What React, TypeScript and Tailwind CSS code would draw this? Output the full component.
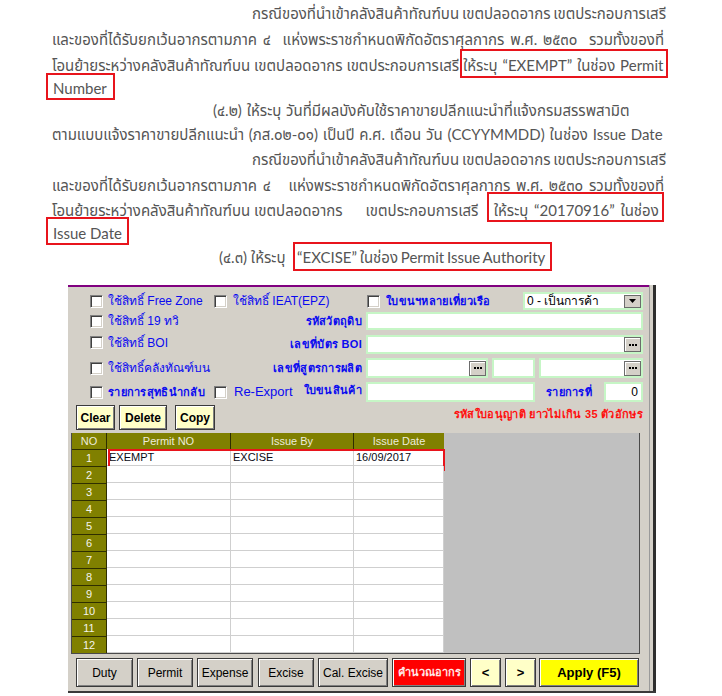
import React from "react";

const docFont = "font-['Lato','Tahoma','Noto_Sans_Thai','Noto_Sans','DejaVu_Sans',sans-serif]";
const winFont = "font-['Liberation_Sans','Tahoma','DejaVu_Sans',sans-serif]";

function Cb() {
  return (
    <span className="inline-block w-[13px] h-[13px] shrink-0 bg-white border border-t-[#808080] border-l-[#808080] border-b-white border-r-white shadow-[inset_1px_1px_0_#404040,inset_-1px_-1px_0_#d4d0c8]" />
  );
}

function Dots() {
  return (
    <div className="w-[17px] h-[15px] shrink-0 bg-[#d4d0c8] border border-[#6c6c6c] flex items-center justify-center gap-[1px] shadow-[inset_1px_1px_0_#ffffff]">
      <span className="w-[2px] h-[2px] bg-black" />
      <span className="w-[2px] h-[2px] bg-black" />
      <span className="w-[2px] h-[2px] bg-black" />
    </div>
  );
}

function Field({ className, children }: { className: string; children?: React.ReactNode }) {
  return (
    <div className={`h-full bg-white border-2 border-[#c6f6c6] flex items-center justify-end ${className}`}>
      {children}
    </div>
  );
}

const blue = "text-[#0a0af0] text-[11px] font-bold tracking-[0.3px] whitespace-nowrap";

function WinBtn({ className, children }: { className: string; children: React.ReactNode }) {
  return (
    <div
      className={`h-full flex items-center justify-center border border-[#3a3a3a] shadow-[inset_1px_1px_0_#ffffff,inset_-1px_-1px_0_#808080] ${className}`}
    >
      {children}
    </div>
  );
}

function Doc() {
  return (
    <div className={`${docFont} text-[15px] text-[#555555] whitespace-nowrap`}>
      <div className="h-[26px] leading-[26px] pl-[252px] [word-spacing:-1px]">
        กรณีของที่นำเข้าคลังสินค้าทัณฑ์บน เขตปลอดอากร เขตประกอบการเสรี
      </div>
      <div className="h-[27px] leading-[27px] pl-[52px] [word-spacing:2px]">
        และของที่ได้รับยกเว้นอากรตามภาค ๔&nbsp; แห่งพระราชกำหนดพิกัดอัตราศุลกากร พ.ศ. ๒๕๓๐&nbsp; รวมทั้งของที่
      </div>
      <div className="h-[24px] leading-[24px] pl-[52px]">
        โอนย้ายระหว่างคลังสินค้าทัณฑ์บน เขตปลอดอากร เขตประกอบการเสรี{" "}
        <span className="relative inline-block leading-[20px] [word-spacing:1px]">
          ให้ระบุ “EXEMPT” ในช่อง Permit
          <span className="absolute -left-[3px] -right-[5px] -top-[6px] -bottom-[3px] border-2 border-[#e8141c]" />
        </span>
      </div>
      <div className="h-[22px] leading-[22px] pl-[53px]">
        <span className="relative inline-block leading-[20px]">
          Number
          <span className="absolute -left-[7px] -right-[8px] -top-[5px] -bottom-[2px] border-2 border-[#e8141c]" />
        </span>
      </div>
      <div className="h-[23px] leading-[23px] pl-[213px] [word-spacing:1px]">
        (๔.๒) ให้ระบุ วันที่มีผลบังคับใช้ราคาขายปลีกแนะนำที่แจ้งกรมสรรพสามิต
      </div>
      <div className="h-[25px] leading-[25px] pl-[52px] [word-spacing:1px]">
        ตามแบบแจ้งราคาขายปลีกแนะนำ (ภส.๐๒-๐๑) เป็นปี ค.ศ. เดือน วัน (CCYYMMDD) ในช่อง Issue Date
      </div>
      <div className="h-[25px] leading-[25px] pl-[252px] [word-spacing:-1px]">
        กรณีของที่นำเข้าคลังสินค้าทัณฑ์บน เขตปลอดอากร เขตประกอบการเสรี
      </div>
      <div className="h-[26px] leading-[26px] pl-[52px] [word-spacing:2px]">
        และของที่ได้รับยกเว้นอากรตามภาค ๔&nbsp;&nbsp; แห่งพระราชกำหนดพิกัดอัตราศุลกากร พ.ศ. ๒๕๓๐ รวมทั้งของที่
      </div>
      <div className="h-[24px] leading-[24px] pl-[52px]">
        โอนย้ายระหว่างคลังสินค้าทัณฑ์บน เขตปลอดอากร&nbsp;&nbsp;&nbsp;&nbsp;&nbsp; เขตประกอบการเสรี&nbsp;&nbsp;&nbsp;{" "}
        <span className="relative inline-block leading-[20px] [word-spacing:2px]">
          ให้ระบุ “20170916” ในช่อง
          <span className="absolute -left-[7px] -right-[5px] -top-[8px] -bottom-[2px] border-2 border-[#e8141c]" />
        </span>
      </div>
      <div className="h-[23px] leading-[23px] pl-[53px]">
        <span className="relative inline-block leading-[20px]">
          Issue Date
          <span className="absolute -left-[7px] -right-[7px] -top-[6px] -bottom-[2px] border-2 border-[#e8141c]" />
        </span>
      </div>
      <div className="h-[25px] leading-[25px] pl-[219px]">
        (๔.๓) ให้ระบุ&nbsp;&nbsp;{" "}
        <span className="relative inline-block leading-[20px] [word-spacing:-1px]">
          “EXCISE” ในช่อง Permit Issue Authority
          <span className="absolute -left-[4px] -right-[7px] -top-[5px] -bottom-[4px] border-2 border-[#e8141c]" />
        </span>
      </div>
    </div>
  );
}

function Table() {
  const rows = Array.from({ length: 12 }, (_, i) => i + 1);
  return (
    <div className="mt-[3px] ml-[3px] w-[569px] h-[221px] bg-[#c0c0c0] border-l border-r border-b border-[#4a4a4a] flex">
      <div className="w-[372px] flex flex-col">
        <div className="h-[16px] flex bg-[#808000] text-[#ececdc] text-[11px]">
          <div className="w-[35px] border-r border-[#2e2e00] flex items-center justify-center">NO</div>
          <div className="w-[124px] border-r border-[#2e2e00] flex items-center justify-center">Permit NO</div>
          <div className="w-[123px] border-r border-[#2e2e00] flex items-center justify-center">Issue By</div>
          <div className="w-[90px] flex items-center justify-center">Issue Date</div>
        </div>
        {rows.map((n) => (
          <div key={n} className="relative h-[17px] flex text-[11px]">
            <div className="w-[35px] bg-[#808000] border-t border-r border-[#2e2e00] flex items-center justify-center text-[#f4f4ec]">
              {n}
            </div>
            <div className="w-[124px] bg-white border-r border-b border-[#cfcfcf] flex items-center pl-[2px] text-[#0a0a14]">
              {n === 1 ? "EXEMPT" : ""}
            </div>
            <div className="w-[123px] bg-white border-r border-b border-[#cfcfcf] flex items-center pl-[2px] text-[#0a0a14]">
              {n === 1 ? "EXCISE" : ""}
            </div>
            <div className="w-[90px] bg-white border-r border-b border-[#cfcfcf] flex items-center pl-[2px] text-[#0a0a14]">
              {n === 1 ? "16/09/2017" : ""}
            </div>
            {n === 1 && (
              <span className="absolute left-[36px] -right-[1px] top-0 -bottom-[5px] border-2 border-[#e8141c]" />
            )}
          </div>
        ))}
      </div>
    </div>
  );
}

function Form() {
  return (
    <div className={`${winFont} mt-[15px] ml-[68px] w-[588px] flex flex-col`}>
      <div className="flex">
        <div className="w-[581px] h-[406px] bg-[#d4d0c8] border-t-2 border-[#800080] flex flex-col">
          {/* Row 1 */}
          <div className="mt-[5px] h-[18px] flex items-center pl-[22px]">
            <div className="w-[124px] flex items-center gap-[5px]">
              <Cb />
              <span className="text-[#0a0af0] text-[12px] whitespace-nowrap">ใช้สิทธิ์ Free Zone</span>
            </div>
            <div className="w-[148px] flex items-center gap-[6px]">
              <Cb />
              <span className="text-[#0a0af0] text-[12px] whitespace-nowrap">ใช้สิทธิ์ IEAT(EPZ)</span>
            </div>
            <div className="w-[4px]" />
            <div className="w-[277px] h-full flex items-center">
              <div className="w-[157px] flex items-center gap-[6px] pl-[1px]">
                <Cb />
                <span className={blue}>ใบขนฯหลายเที่ยวเรือ</span>
              </div>
              <div className="w-[120px] h-full bg-white border-2 border-[#c6f6c6] flex items-center justify-between">
                <span className="text-[12px] text-black pl-[2px] whitespace-nowrap">0 - เป็นการค้า</span>
                <div className="w-[17px] h-[13px] bg-[#d4d0c8] border border-[#6c6c6c] flex items-center justify-center">
                  <svg width="7" height="4" viewBox="0 0 7 4">
                    <path d="M0 0 H7 L3.5 4 Z" fill="#000" />
                  </svg>
                </div>
              </div>
            </div>
          </div>
          {/* Row 2 */}
          <div className="mt-[2px] h-[18px] flex items-center pl-[22px]">
            <div className="w-[124px] flex items-center gap-[5px]">
              <Cb />
              <span className="text-[#0a0af0] text-[12px] whitespace-nowrap">ใช้สิทธิ์ 19 ทวิ</span>
            </div>
            <div className="w-[148px] flex justify-end">
              <span className={blue}>รหัสวัตถุดิบ</span>
            </div>
            <div className="w-[4px]" />
            <Field className="w-[277px]" />
          </div>
          {/* Row 3 */}
          <div className="mt-[5px] h-[19px] flex items-center pl-[22px]">
            <div className="w-[124px] flex items-center gap-[5px] -mt-[4px]">
              <Cb />
              <span className="text-[#0a0af0] text-[12px] whitespace-nowrap">ใช้สิทธิ์ BOI</span>
            </div>
            <div className="w-[148px] flex justify-end">
              <span className={blue}>เลขที่บัตร BOI</span>
            </div>
            <div className="w-[4px]" />
            <Field className="w-[277px]">
              <Dots />
            </Field>
          </div>
          {/* Row 4 */}
          <div className="mt-[4px] h-[20px] flex items-center pl-[22px]">
            <div className="w-[124px] flex items-center gap-[5px]">
              <Cb />
              <span className="text-[#0a0af0] text-[12px] whitespace-nowrap">ใช้สิทธิ์คลังทัณฑ์บน</span>
            </div>
            <div className="w-[148px] flex justify-end">
              <span className={blue}>เลขที่สูตรการผลิต</span>
            </div>
            <div className="w-[4px]" />
            <div className="w-[277px] h-full flex gap-[4px]">
              <Field className="w-[122px]">
                <Dots />
              </Field>
              <Field className="w-[43px]" />
              <Field className="w-[104px]">
                <Dots />
              </Field>
            </div>
          </div>
          {/* Row 5 */}
          <div className="mt-[4px] h-[20px] flex items-center pl-[22px]">
            <div className="w-[124px] flex items-center gap-[5px]">
              <Cb />
              <span className={blue}>รายการสุทธินำกลับ</span>
            </div>
            <div className="w-[148px] flex items-center">
              <Cb />
              <span className="ml-[7px] text-[#0a0af0] text-[13px] whitespace-nowrap">Re-Export</span>
              <span className={`${blue} ml-auto -mt-[3px]`}>ใบขนสินค้า</span>
            </div>
            <div className="w-[4px]" />
            <div className="w-[277px] h-full flex items-center">
              <Field className="w-[169px]" />
              <span className={`${blue} ml-[11px] w-[58px]`}>รายการที่</span>
              <Field className="w-[39px] pr-[3px]">
                <span className="text-[12px] text-black">0</span>
              </Field>
            </div>
          </div>
          {/* Buttons row */}
          <div className="mt-[3px] h-[25px] flex pl-[8px]">
            <WinBtn className="w-[39px] bg-[#ffffc8]">
              <span className="text-[12px] font-bold text-black">Clear</span>
            </WinBtn>
            <WinBtn className="ml-[4px] w-[48px] bg-[#ffffc8]">
              <span className="text-[12px] font-bold text-black">Delete</span>
            </WinBtn>
            <WinBtn className="ml-[8px] w-[40px] bg-[#ffffc8]">
              <span className="text-[12px] font-bold text-black">Copy</span>
            </WinBtn>
            <div className="flex-1 flex justify-end pr-[6px] pt-[1px]">
              <span className="text-[#ff1010] text-[11px] font-bold tracking-[0.3px] whitespace-nowrap">
                รหัสใบอนุญาติ ยาวไม่เกิน 35 ตัวอักษร
              </span>
            </div>
          </div>
          <Table />
          {/* Bottom buttons */}
          <div className="mt-[4px] h-[29px] flex pl-[8px] text-[12px] text-black">
            <WinBtn className="w-[57px] bg-[#d4d0c8]">Duty</WinBtn>
            <WinBtn className="ml-[4px] w-[56px] bg-[#d4d0c8]">Permit</WinBtn>
            <WinBtn className="ml-[4px] w-[56px] bg-[#d4d0c8]">Expense</WinBtn>
            <WinBtn className="ml-[5px] w-[56px] bg-[#d4d0c8]">Excise</WinBtn>
            <WinBtn className="ml-[4px] w-[70px] bg-[#d4d0c8]">Cal. Excise</WinBtn>
            <WinBtn className="ml-[4px] w-[74px] bg-[#ff0000]">
              <span className="text-[#ffe8e8] text-[11px] font-bold whitespace-nowrap">คำนวณอากร</span>
            </WinBtn>
            <WinBtn className="ml-[4px] w-[31px] bg-[#ffffc8]">
              <span className="font-bold text-[13px]">&lt;</span>
            </WinBtn>
            <WinBtn className="ml-[4px] w-[31px] bg-[#ffffc8]">
              <span className="font-bold text-[13px]">&gt;</span>
            </WinBtn>
            <WinBtn className="ml-[3px] w-[100px] bg-[#ffff00]">
              <span className="font-bold text-[13px]">Apply (F5)</span>
            </WinBtn>
          </div>
        </div>
        <div className="w-[1px] bg-[#9a9a9a]" />
        <div className="w-[3px] bg-[#d4d0c8]" />
        <div className="w-[3px] bg-[#2e2e2e]" />
      </div>
      <div className="h-[2px] bg-[#3a3a3a]" />
    </div>
  );
}

export default function App() {
  return (
    <div className="w-[722px] h-[696px] bg-white overflow-hidden">
      <Doc />
      <Form />
    </div>
  );
}
